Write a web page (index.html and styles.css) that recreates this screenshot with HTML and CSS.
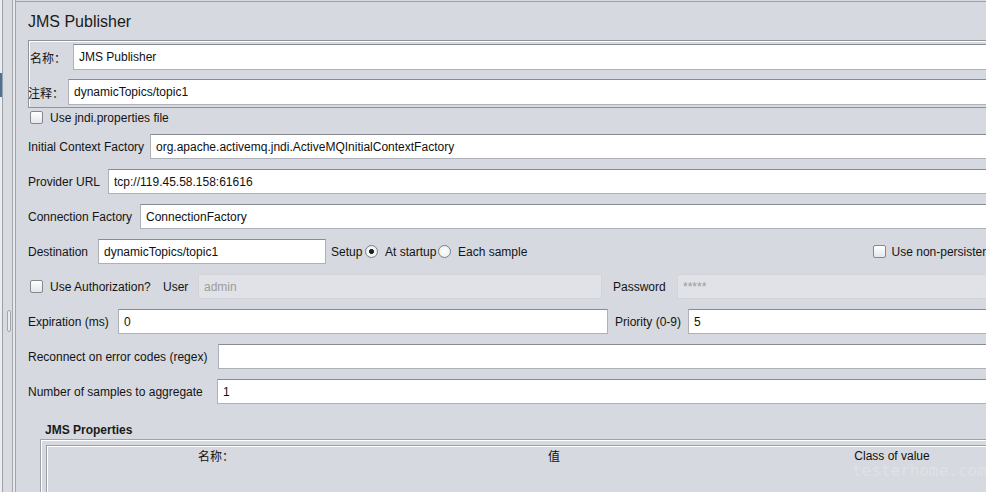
FILE: index.html
```html
<!DOCTYPE html>
<html>
<head>
<meta charset="utf-8">
<title>JMS Publisher</title>
<link rel="stylesheet" href="styles.css">
</head>
<body>
<div class="app">
  <div class="sidebar">
    <div class="tree"><div class="sel"></div></div>
    <div class="splitter"><div class="grip"></div></div>
    <div class="edge"></div>
  </div>
  <div class="panel">
    <div class="title">JMS Publisher</div>
    <div class="namebox">
      <div class="nrow nrow1"><span class="nlbl cjk">名称：</span><div class="field">JMS Publisher</div></div>
      <div class="nrow nrow2"><span class="nlbl cjk">注释：</span><div class="field">dynamicTopics/topic1</div></div>
    </div>
    <div class="cbrow"><span class="check"></span><span>Use jndi.properties file</span></div>

    <div class="row"><span class="lbl w-icf">Initial Context Factory</span><div class="field">org.apache.activemq.jndi.ActiveMQInitialContextFactory</div></div>
    <div class="row"><span class="lbl w-url">Provider URL</span><div class="field">tcp://119.45.58.158:61616</div></div>
    <div class="row"><span class="lbl w-cf">Connection Factory</span><div class="field">ConnectionFactory</div></div>
    <div class="row dest-row">
      <span class="lbl w-dest">Destination</span><div class="field fixed dest">dynamicTopics/topic1</div>
      <span class="setup">Setup</span><span class="radio on"></span><span class="startup">At startup</span><span class="radio"></span><span class="each">Each sample</span>
      <span class="spacer"></span>
      <span class="check"></span><span class="np">Use non-persistent delivery mode?</span>
    </div>
    <div class="row auth">
      <span class="check"></span><span class="authlbl">Use Authorization?</span><span class="user">User</span><div class="field off fixed userf">admin</div>
      <span class="pw">Password</span><div class="field off pwf">*****</div>
    </div>
    <div class="row">
      <span class="lbl w-exp">Expiration (ms)</span><div class="field fixed expf">0</div>
      <span class="prio">Priority (0-9)</span><div class="field">5</div>
    </div>
    <div class="row"><span class="lbl w-rec">Reconnect on error codes (regex)</span><div class="field"></div></div>
    <div class="row"><span class="lbl w-num">Number of samples to aggregate</span><div class="field">1</div></div>

    <div class="props">
      <div class="ptitle">JMS Properties</div>
      <div class="pbox">
        <div class="table">
          <div class="thead">
            <div class="th cjk">名称：</div>
            <div class="th cjk">值</div>
            <div class="th">Class of value</div>
          </div>
        </div>
      </div>
    </div>
  </div>
</div>
<div class="watermark">testerhome.com</div>
</body>
</html>
```
FILE: styles.css
```css
html, body {
  margin: 0;
  padding: 0;
}
body {
  width: 986px;
  height: 492px;
  overflow: hidden;
  background: #d6d9df;
  font-family: "Liberation Sans", Arial, "Noto Sans CJK SC", sans-serif;
  font-size: 12px;
  color: #141414;
  position: relative;
}
.cjk {
  font-family: "Noto Sans CJK SC", "Liberation Sans", sans-serif;
}
.app {
  display: flex;
  height: 492px;
}
.sidebar {
  display: flex;
  flex: none;
  width: 16px;
}
.tree {
  width: 2px;
  background: #eceef1;
  border-right: 1px solid #9ca0a7;
  padding-top: 73px;
}
.sel {
  height: 24px;
  background: #4b7197;
}
.splitter {
  width: 9px;
  background: #d8dbe0;
  border-right: 1px solid #a4a8ae;
  padding-top: 310px;
}
.grip {
  width: 2px;
  height: 20px;
  margin-left: 4px;
  border: 1px solid #a3a7ad;
  border-radius: 2px;
  background: #e9ebee;
}
.edge {
  width: 2px;
  background: #e7e9ec;
  border-right: 1px solid #a1a5ab;
}
.panel {
  flex: none;
  width: 1060px;
  margin-top: 1px;
  border-top: 1px solid #9ea2a9;
  padding-left: 12px;
}
.title {
  height: 36px;
  padding-top: 2px;
  line-height: 36px;
  font-size: 16px;
  color: #1b1b1b;
}
.namebox {
  border: 1px solid #8f939a;
  box-shadow: inset 1px 1px 0 #ffffff;
  padding: 3px 0 2px 0;
  display: flex;
  flex-direction: column;
  gap: 9px;
}
.nrow {
  display: flex;
  align-items: center;
  height: 26px;
}
.nrow .field {
  flex: 1;
  height: 26px;
}
.nrow1 { padding-left: 1px; }
.nrow1 .nlbl { width: 43px; }
.nrow2 { margin-left: -1px; }
.nrow2 .nlbl { width: 40px; }
.nlbl {
  flex: none;
  font-size: 12px;
}
.cbrow {
  height: 19px;
  margin-bottom: 2px;
  display: flex;
  align-items: center;
  gap: 7px;
  padding-left: 2px;
}
.check {
  flex: none;
  width: 11px;
  height: 11px;
  border: 1px solid #85888e;
  border-radius: 2px;
  background: linear-gradient(#ffffff, #e4e6ea);
}
.row {
  height: 35px;
  display: flex;
  align-items: center;
  gap: 7px;
  white-space: nowrap;
}
.lbl { flex: none; }
.w-icf { width: 115px; }
.w-url { width: 73px; }
.w-cf { width: 105px; }
.w-dest { width: 63px; }
.w-exp { width: 83px; }
.w-rec { width: 183px; }
.w-num { width: 182px; }
.field {
  flex: 1;
  box-sizing: border-box;
  height: 25px;
  background: #ffffff;
  border: 1px solid #aeb2b8;
  border-top-color: #888b91;
  padding-left: 5px;
  display: flex;
  align-items: center;
  white-space: nowrap;
  overflow: hidden;
  color: #111;
}
.field.fixed { flex: none; }
.field.off {
  background: #e0e2e7;
  border-color: #d2d4d9;
  color: #9c9c9c;
}
.dest-row { gap: 0; }
.dest { width: 228px; margin-left: 7px; }
.setup { margin-left: 5px; width: 31px; }
.radio {
  flex: none;
  width: 11px;
  height: 11px;
  border: 1px solid #7d8086;
  border-radius: 50%;
  background: radial-gradient(circle, #ffffff 0, #e6e8eb 100%);
}
.radio.on {
  margin-left: 3px;
  background: radial-gradient(circle, #222 0, #222 2.2px, #f4f5f7 2.8px, #e6e8eb 100%);
}
.startup { margin-left: 7px; width: 53px; }
.each { margin-left: 7px; }
.spacer { flex: 1; }
.np { margin-left: 6px; margin-right: 11px; }
.auth { padding-left: 2px; }
.authlbl { width: 106px; }
.user { width: 28px; }
.userf { width: 404px; }
.pw { margin-left: 4px; width: 57px; }
.pwf { border-color: #dcdee2; }
.expf { width: 490px; }
.prio { width: 66px; }
.props {
  margin-left: 12px;
}
.ptitle {
  margin-top: 13px;
  height: 17px;
  line-height: 17px;
  padding-left: 5px;
  font-weight: bold;
  color: #1a1a1a;
}
.pbox {
  border: 1px solid #a0a4aa;
  box-shadow: inset 1px 1px 0 #ffffff;
  padding: 5px 0 0 5px;
  height: 60px;
}
.table {
  border: 1px solid #9b9fa5;
  box-shadow: inset 1px 1px 0 #ffffff;
  height: 60px;
}
.thead {
  display: grid;
  grid-template-columns: 338px 338px 338px;
  height: 20px;
}
.th {
  text-align: center;
  line-height: 20px;
  color: #111;
}
.watermark {
  position: absolute;
  left: 852px;
  top: 461px;
  font-family: "DejaVu Sans Mono", monospace;
  font-size: 16px;
  line-height: 20px;
  color: #dfe1e5;
}
```
